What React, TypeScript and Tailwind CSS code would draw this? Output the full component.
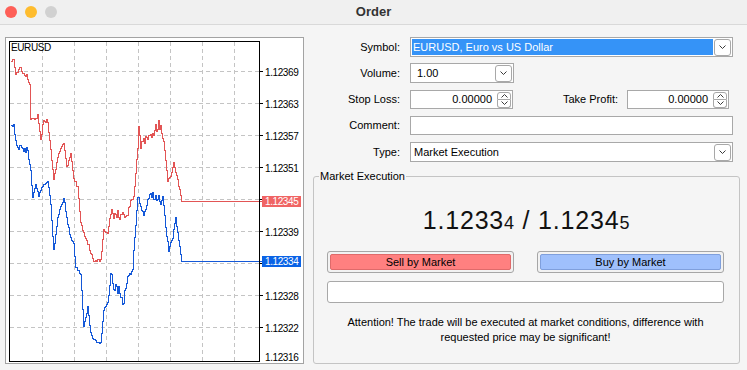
import React from 'react';

type Pt = [number, number];
type Zone = [number, number, number];

const redPts: Pt[] = [
  [10, 62], [13, 58], [15, 73], [18, 70], [20, 66], [22, 73], [26, 75], [29, 85], [30, 118], [35, 118],
  [37, 113], [40, 140], [43, 120], [47, 120], [50, 150], [53, 180], [57, 157], [60, 147], [63, 142],
  [66, 167], [70, 153], [73, 177], [77, 187], [80, 223], [83, 233], [87, 243], [93, 260], [100, 260],
  [103, 230], [107, 233], [110, 213], [127, 217], [130, 200], [133, 197], [137, 147], [138, 125],
  [140, 143], [147, 137], [153, 130], [158, 125], [163, 140], [167, 180], [170, 177], [173, 163],
  [177, 180], [181, 201],
];

const bluePts: Pt[] = [
  [10, 125], [13, 125], [16, 147], [27, 150], [30, 170], [32, 197], [35, 183], [38, 195], [42, 185],
  [47, 180], [50, 203], [53, 250], [57, 217], [60, 207], [63, 197], [67, 223], [70, 237], [73, 243],
  [75, 267], [80, 273], [83, 327], [87, 307], [90, 333], [93, 340], [100, 343], [103, 310], [107, 303],
  [110, 278], [123, 300], [127, 277], [132, 270], [133, 250], [137, 197], [140, 207], [143, 217],
  [147, 200], [150, 196], [157, 196], [160, 203], [162, 196], [165, 227], [168, 250], [172, 237],
  [175, 218], [178, 240], [181, 261],
];

const redZones: Zone[] = [[35, 50, 3], [110, 128, 5], [137, 160, 6]];
const blueZones: Zone[] = [[16, 28, 3], [110, 124, 6], [137, 160, 4]];

function rnd(i: number) {
  const s = Math.sin(i * 12.9898) * 43758.5453;
  return s - Math.floor(s);
}

function interp(pts: Pt[], x: number) {
  for (let i = 0; i < pts.length - 1; i++) {
    const [x0, y0] = pts[i];
    const [x1, y1] = pts[i + 1];
    if (x >= x0 && x <= x1) return x1 === x0 ? y1 : y0 + ((y1 - y0) * (x - x0)) / (x1 - x0);
  }
  return pts[pts.length - 1][1];
}

// tick chart: one step per pixel, with some noise so it looks like real ticks
function tickPath(pts: Pt[], zones: Zone[], seed: number) {
  let d = '';
  const end = pts[pts.length - 1];
  for (let x = 10; x <= end[0]; x++) {
    const z = zones.find((q) => x >= q[0] && x <= q[1]);
    const amp = z ? z[2] : 1.5;
    let y = Math.round(interp(pts, x) + (rnd(x * 7 + seed) - 0.5) * 2 * amp) + 0.5;
    if (x === end[0]) y = end[1] + 0.5;
    d += x === 10 ? `M${x + 0.5} ${y}` : `H${x + 0.5}V${y}`;
  }
  return d + `H262`;
}

const gridX = [42, 74, 106, 138, 170, 202, 234];
const gridY = [71, 103, 135, 167, 199, 231, 263, 295, 327];
const axis: [string, number][] = [
  ['1.12369', 72], ['1.12363', 104], ['1.12357', 136], ['1.12351', 168],
  ['1.12339', 232], ['1.12328', 296], ['1.12322', 328], ['1.12316', 357],
];

function Chart() {
  return (
    <div className="ml-[5px] mt-[12px] w-[299px] h-[327px] border border-[#a3a3a3] bg-white">
      <svg width={297} height={325} viewBox="6 38 297 325" shapeRendering="crispEdges">
        {gridX.map((x) => (
          <line key={x} x1={x + 0.5} y1={42} x2={x + 0.5} y2={361} stroke="#c4c4c4" strokeDasharray="4 3" />
        ))}
        {gridY.map((y) => (
          <g key={y}>
            <line x1={10} y1={y + 0.5} x2={259} y2={y + 0.5} stroke="#c4c4c4" strokeDasharray="4 3" />
            <line x1={259} y1={y + 0.5} x2={263} y2={y + 0.5} stroke="#000" />
          </g>
        ))}
        <path d={tickPath(redPts, redZones, 3)} fill="none" stroke="#e25555" />
        <path d={tickPath(bluePts, blueZones, 11)} fill="none" stroke="#1458d8" />
        <rect x={9.5} y={41.5} width={250} height={319.5} fill="none" stroke="#000" />
        <g fontFamily="Liberation Sans, Arial, sans-serif" fontSize={10} letterSpacing={-0.4} shapeRendering="auto">
          <text x={11} y={51} fill="#000">EURUSD</text>
          {axis.map(([t, y]) => (
            <text key={t} x={265} y={y + 3.5} fill="#000">{t}</text>
          ))}
          <rect x={262} y={196} width={39} height={11} fill="#f06464" />
          <text x={265} y={205} fill="#fff">1.12345</text>
          <rect x={262} y={256} width={39} height={11} fill="#0a63e6" />
          <text x={265} y={265} fill="#fff">1.12334</text>
        </g>
      </svg>
    </div>
  );
}

function Chevron({ up = false }: { up?: boolean }) {
  return (
    <svg width={7} height={4} viewBox="0 0 7 4">
      <path d={up ? 'M0.5 3.5L3.5 0.5L6.5 3.5' : 'M0.5 0.5L3.5 3.5L6.5 0.5'} fill="none" stroke="#3a3a3a" strokeWidth={1} />
    </svg>
  );
}

function DropBtn() {
  return (
    <div className="w-[17px] h-[17px] shrink-0 border border-[#a8a8a8] rounded-[3px] bg-white flex items-center justify-center">
      <Chevron />
    </div>
  );
}

function Spinner() {
  return (
    <div className="w-[14px] h-[16px] shrink-0 flex flex-col">
      <div className="h-[8px] border border-[#a8a8a8] rounded-t-[3px] bg-white flex items-center justify-center">
        <Chevron up />
      </div>
      <div className="h-[8px] border border-t-0 border-[#a8a8a8] rounded-b-[3px] bg-white flex items-center justify-center">
        <Chevron />
      </div>
    </div>
  );
}

function Label({ children }: { children: React.ReactNode }) {
  return <div className="w-[90px] text-right mr-[10px] shrink-0">{children}</div>;
}

export default function App() {
  return (
    <div className="w-[747px] h-[370px] overflow-hidden bg-[#f5f5f5] text-black text-[11px] font-['Liberation_Sans',Arial,sans-serif]">
      <div className="h-[25px] bg-[#f0f0f0] border-b border-[#d9d9d9] flex items-center">
        <div className="w-[57px] pl-[5px] flex gap-[8px]">
          <span className="w-[12px] h-[12px] rounded-full bg-[#fe5f57]" />
          <span className="w-[12px] h-[12px] rounded-full bg-[#febc2e]" />
          <span className="w-[12px] h-[12px] rounded-full bg-[#d1d1d1]" />
        </div>
        <div className="flex-1 text-center text-[13px] font-bold text-[#333]">Order</div>
        <div className="w-[57px]" />
      </div>

      <div className="flex">
        <Chart />

        <div className="ml-[6px] w-[437px] pt-[12px] flex flex-col">
          <div className="flex items-center h-[20px]">
            <Label>Symbol:</Label>
            <div className="w-[323px] h-[20px] border border-[#a8a8a8] bg-white p-[1px] flex items-center gap-[1px]">
              <div className="flex-1 h-[16px] bg-[#3593f7] text-white pl-[1px] leading-[16px]">EURUSD, Euro vs US Dollar</div>
              <DropBtn />
            </div>
          </div>

          <div className="flex items-center h-[20px] mt-[6px]">
            <Label>Volume:</Label>
            <div className="w-[104px] h-[20px] border border-[#a8a8a8] bg-white p-[1px] flex items-center">
              <div className="flex-1 pl-[5px]">1.00</div>
              <DropBtn />
            </div>
          </div>

          <div className="flex items-center h-[19px] mt-[7px]">
            <Label>Stop Loss:</Label>
            <div className="w-[103px] h-[19px] border border-[#a8a8a8] bg-white px-[1px] flex items-center">
              <div className="flex-1 text-right pr-[5px]">0.00000</div>
              <Spinner />
            </div>
            <div className="w-[105px] text-right mr-[9px]">Take Profit:</div>
            <div className="w-[102px] h-[19px] border border-[#a8a8a8] bg-white px-[1px] flex items-center">
              <div className="flex-1 text-right pr-[5px]">0.00000</div>
              <Spinner />
            </div>
          </div>

          <div className="flex items-center h-[19px] mt-[7px]">
            <Label>Comment:</Label>
            <div className="w-[323px] h-[19px] border border-[#a8a8a8] bg-white" />
          </div>

          <div className="flex items-center h-[20px] mt-[7px]">
            <Label>Type:</Label>
            <div className="w-[323px] h-[20px] border border-[#a8a8a8] bg-white p-[1px] flex items-center">
              <div className="flex-1 pl-[2px]">Market Execution</div>
              <DropBtn />
            </div>
          </div>

          <fieldset className="mt-[8px] ml-[3px] w-[427px] h-[194px] border border-[#c4c4c4] rounded-[3px]">
            <legend className="ml-[5px] px-[1px] leading-[13px]">Market Execution</legend>
            <div className="mt-[22px] text-center leading-[30px] text-[25px] tracking-[0.8px] text-[#111]">
              1.1233<span className="text-[18px]">4</span> / 1.1234<span className="text-[18px]">5</span>
            </div>
            <div className="mt-[13px] ml-[13px] flex gap-[23px]">
              <div className="w-[187px] h-[22px] border border-[#a6a6a6] rounded-[3px] bg-[#f2f2f2] p-[2px]">
                <div className="h-full bg-[#ff8080] border border-[#df6a6a] rounded-[2px] flex items-center justify-center">Sell by Market</div>
              </div>
              <div className="w-[187px] h-[22px] border border-[#a6a6a6] rounded-[3px] bg-[#f2f2f2] p-[2px]">
                <div className="h-full bg-[#9fc0fc] border border-[#7f9fdc] rounded-[2px] flex items-center justify-center">Buy by Market</div>
              </div>
            </div>
            <div className="mt-[8px] ml-[13px] w-[397px] h-[22px] border border-[#a8a8a8] rounded-[3px] bg-white" />
            <div className="mt-[12px] ml-[13px] w-[397px] text-center leading-[15px]">
              Attention! The trade will be executed at market conditions, difference with
              <br />
              requested price may be significant!
            </div>
          </fieldset>
        </div>
      </div>
    </div>
  );
}
